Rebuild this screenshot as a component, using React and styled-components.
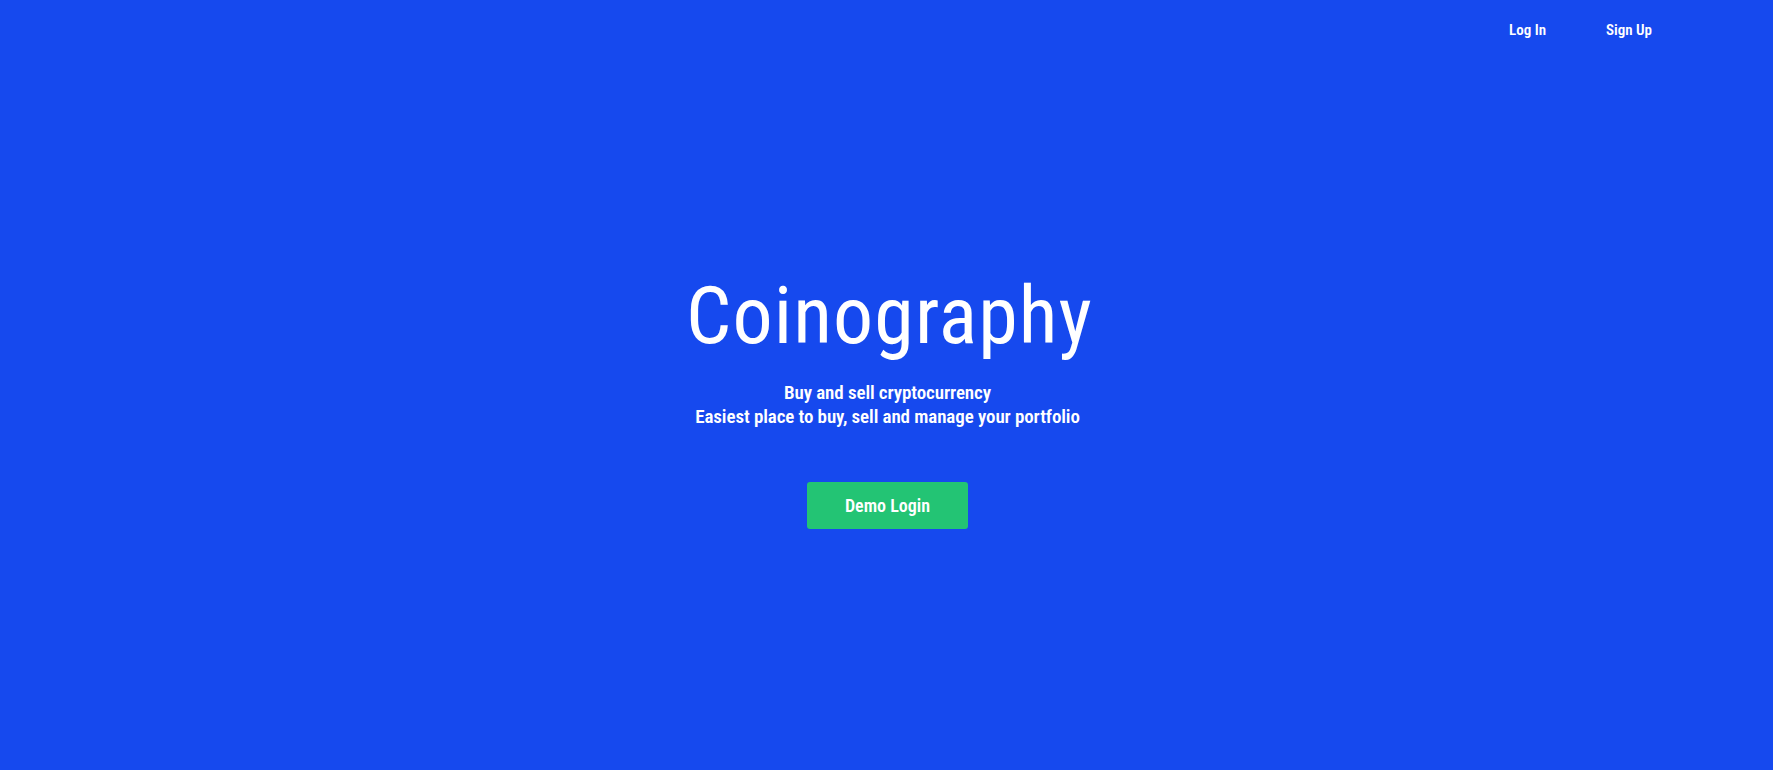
import React from 'react'
import styled, {createGlobalStyle} from 'styled-components';

const GlobalStyle = createGlobalStyle`
    html, body {
        margin: 0;
        padding: 0;
        background-color: #1649ee;
    }
    body {
        font-family: "Roboto Condensed", Roboto, "Liberation Sans", sans-serif;
        font-stretch: 75%;
        color: #ffffff;
    }
`;

const Page = styled.div`
    background-color: #1649ee;
    display: flex;
    flex-flow: column nowrap;
    height: 770px;
    width: 100%;
`;

const NavBar = styled.nav`
    display: flex;
    justify-content: flex-end;
    gap: 60px;
    padding: 20px 121px 0 0;
`;

const NavLink = styled.a`
    color: #ffffff;
    font-size: 15px;
    font-weight: 600;
    line-height: 20px;
    text-decoration: none;
    cursor: pointer;
`;

const Hero = styled.section`
    align-items: center;
    display: flex;
    flex-flow: column nowrap;
    padding: 230px 0 0 2px;
`;

const Title = styled.h1`
    font-size: 80px;
    font-weight: 400;
    letter-spacing: 1.1px;
    line-height: 92px;
    margin: 0 0 0 4px;
`;

const Tagline = styled.p`
    font-size: 19px;
    font-weight: 600;
    letter-spacing: -0.1px;
    line-height: 24px;
    margin: 19px 0 0;
    text-align: center;
`;

const DemoButton = styled.button`
    background-color: #23c474;
    border: none;
    border-radius: 3px;
    color: #ffffff;
    cursor: pointer;
    font-family: inherit;
    font-stretch: inherit;
    font-size: 18px;
    font-weight: 600;
    height: 47px;
    margin-top: 53px;
    padding: 0;
    width: 161px;
`;

const App = () => {
    return <Page>
        <GlobalStyle />
        <NavBar>
            <NavLink>Log In</NavLink>
            <NavLink>Sign Up</NavLink>
        </NavBar>
        <Hero>
            <Title>Coinography</Title>
            <Tagline>
                Buy and sell cryptocurrency<br />
                Easiest place to buy, sell and manage your portfolio
            </Tagline>
            <DemoButton>Demo Login</DemoButton>
        </Hero>
    </Page>
}

export default App;
